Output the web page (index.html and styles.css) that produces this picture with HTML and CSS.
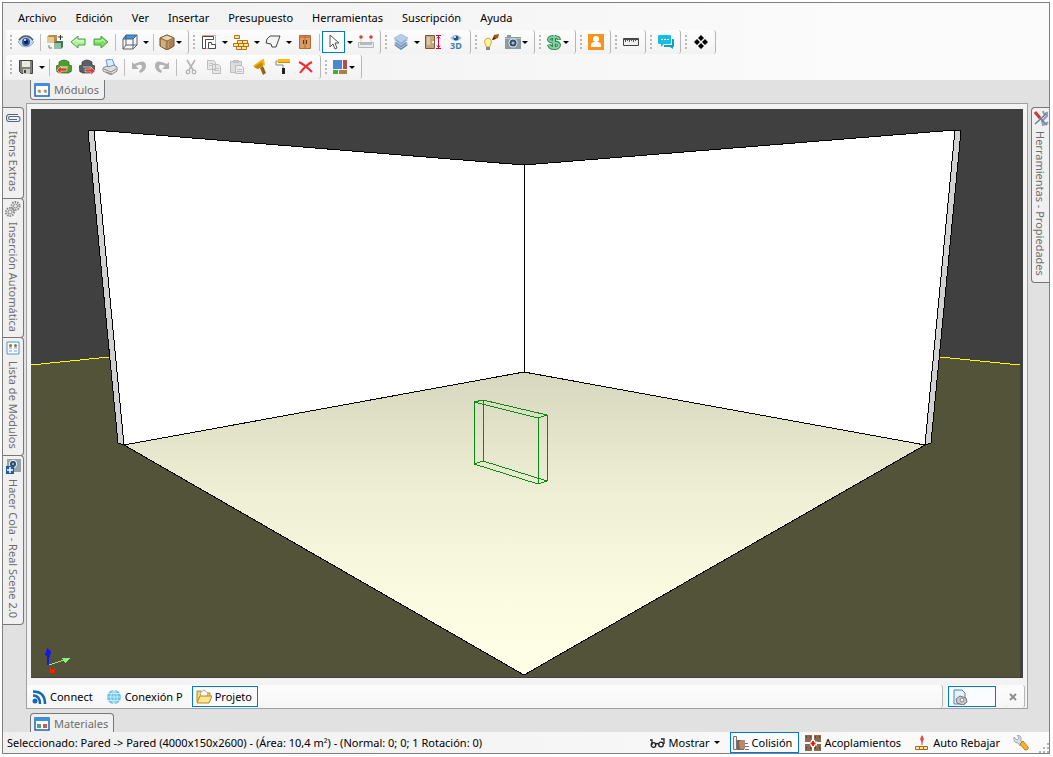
FILE: index.html
```html
<!DOCTYPE html>
<html lang="es">
  <head>
    <meta charset="UTF-8" />
    <meta name="viewport" content="width=device-width, initial-scale=1.0" />
    <title>Proyecto 3D</title>
    <link rel="stylesheet" href="styles.css">
  </head>

  <body>
    <div class="window">
      <header class="top">
        <nav class="menu">
          <button>Archivo</button>
          <button>Edición</button>
          <button>Ver</button>
          <button>Insertar</button>
          <button>Presupuesto</button>
          <button>Herramientas</button>
          <button>Suscripción</button>
          <button>Ayuda</button>
        </nav>

        <!-- first toolbar row -->
        <div class="toolbar">
          <div class="strip">
            <button class="tool" aria-label="Visualizar">
              <svg viewBox="0 0 16 16"><path d="M0 8Q3 3 8 3t8 5q-3 5-8 5T0 8z" fill="#c9d6e6" stroke="#7d93b5" stroke-width=".7"/><path d="M1 6q3-4 7-4t7 4" fill="none" stroke="#4d5870" stroke-width="1.5"/><circle cx="8" cy="8" r="4" fill="#2d5ca6"/><circle cx="8" cy="8" r="2" fill="#0d1d40"/><circle cx="7" cy="6" r="1" fill="#fff"/></svg>
            </button>
            <i class="sep"></i>
            <button class="tool" aria-label="Reemplazar módulo">
              <svg viewBox="0 0 16 16"><path d="M0 3l2-2h8v6L8 9H0z" fill="#b98a4d"/><path d="M0 3h7v6H0z" fill="#e9c793"/><path d="M7 9l2-2h7v6l-2 2H7z" fill="#3f7558"/><path d="M7 9h7v6H7z" fill="#8cc0a0"/><path d="M11 3h5M13.500 1v5" stroke="#333"/><path d="M2 11v3h3" fill="none" stroke="#777"/></svg>
            </button>
            <button class="tool" aria-label="Anterior">
              <svg viewBox="0 0 16 16"><path d="M1 8l7-6v3h7v6H8v3z" fill="#b5efa0" stroke="#3da63a"/><path d="M3 8l4-3v2h7" fill="none" stroke="#e9fde2"/></svg>
            </button>
            <button class="tool" aria-label="Siguiente">
              <svg viewBox="0 0 16 16"><path d="M15 8L8 2v3H1v6h7v3z" fill="#7ddc62" stroke="#3da63a"/><path d="M2 7h7V5l3 3" fill="none" stroke="#d9fbcc"/></svg>
            </button>
            <i class="sep"></i>
            <button class="tool" aria-label="Vista">
              <svg viewBox="0 0 16 16"><path d="M4 1h11l-4 4H1z" fill="#3b93ee"/><path d="M1 5h10v10H1zM1 5l3-4h11v10l-4 4M11 5l4-4M4 1v10h11M4 11l-3 4" fill="none" stroke="#56616d"/></svg>
            </button>
            <button class="caret" aria-label="Más vistas"></button>
            <i class="sep"></i>
            <button class="tool drop" aria-label="Texturas">
              <svg viewBox="0 0 16 16"><path d="M1 4l7-3 7 3v8l-7 4-7-4z" fill="#c39c6e" stroke="#6d4b27"/><path d="M1 4l7 3 7-3-7-3z" fill="#ecd4ae" stroke="#8a673f"/><path d="M3 6v7M5 7v7" stroke="#e0c194"/><path d="M8 7v9M11 7v7M13 6v7" stroke="#8b6439"/></svg>
            </button>
          </div>

          <div class="strip">
            <button class="tool" aria-label="Pared">
              <svg viewBox="0 0 16 16"><path d="M1.500 1.500h13v13h-13z" fill="#fff" stroke="#f09a9a"/><path d="M1.500 14.500v-12h11v3h-8v9zM7.500 14.500v-6h3v2h4v4z" fill="#fff" stroke="#4a4a4a"/></svg>
            </button>
            <button class="caret" aria-label="Más paredes"></button>
            <button class="tool" aria-label="Ladrillos">
              <svg viewBox="0 0 16 16"><path d="M1.500 1.500h5v3h-5zM4.500 6.500h5v3h-5zM.500 9.500h5v3h-5zM5.500 9.500h5v3h-5zM10.500 9.500h5v3h-5zM3.500 12.500h5v3h-5zM8.500 12.500h5v3h-5zM9.500 6.500h5v3h-5z" fill="#ffe2a0" stroke="#b0730f"/></svg>
            </button>
            <button class="caret" aria-label="Más ladrillos"></button>
            <button class="tool" aria-label="Forma">
              <svg viewBox="0 0 16 16"><path d="M5 2h10l-4 11H7L6 10 1 9l1-4z" fill="#f4f4f4" stroke="#444"/></svg>
            </button>
            <button class="caret" aria-label="Más formas"></button>
            <button class="tool" aria-label="Armario">
              <svg viewBox="0 0 16 16"><path d="M2.500 1.500h11v13h-11z" fill="#dd9b60" stroke="#b06d3a"/><path d="M8 2v12M3 3h10" stroke="#b06d3a"/><path d="M6.500 6v4M9.500 6v4" stroke="#5c3012"/></svg>
            </button>
            <i class="sep"></i>
            <button class="tool active" aria-label="Seleccionar">
              <svg viewBox="0 0 16 16"><path d="M4 1v12l3-3 2 5 2-1-2-5h4z" fill="#fff" stroke="#555"/></svg>
            </button>
            <button class="caret" aria-label="Más selecciones"></button>
            <button class="tool" aria-label="Medir">
              <svg viewBox="0 0 16 16"><path d="M.500 8.500h15v5H.500z" fill="#ececf2" stroke="#b5b5bd"/><path d="M3 9v2M5 9v2M7 9v2M9 9v2M11 9v2M13 9v2" stroke="#888"/><path d="M3 4v4M13 4v4" stroke="#ccc"/><circle cx="3" cy="3" r="1.800" fill="#c44848"/><circle cx="13" cy="3" r="1.800" fill="#c44848"/></svg>
            </button>
          </div>

          <div class="strip">
            <button class="tool" aria-label="Capas">
              <svg viewBox="0 0 16 16"><path d="M1 11l7-4 7 4-7 5z" fill="#6787ab"/><path d="M1 9l7-4 7 4-7 5z" fill="#7c9dc2" stroke="#dfe9f5" stroke-width=".5"/><path d="M1 6l7-4 7 4-7 5z" fill="#92b2d4" stroke="#dfe9f5" stroke-width=".5"/><path d="M1 4l7-4 7 4-7 5z" fill="#b6cfe8" stroke="#84a5c9" stroke-width=".5"/></svg>
            </button>
            <button class="caret" aria-label="Más capas"></button>
            <button class="tool" aria-label="Altura">
              <svg viewBox="0 0 16 16"><path d="M.500 1.500h9v13h-9z" fill="#c4a77e" stroke="#76583a"/><path d="M2 3h3v8H2z" fill="#dcc8a6"/><circle cx="8" cy="8" r="1" fill="#fff"/><path d="M11 1.500h5M11 14.500h5M13.500 2v12M12 4.500l1.500-2 1.500 2M12 11.500l1.500 2 1.500-2" fill="none" stroke="#d6003f"/></svg>
            </button>
            <button class="tool" aria-label="Vista 3D">
              <svg viewBox="0 0 16 16"><path d="M2 4q6-6 12 0-6 6-12 0z" fill="#a7c7de"/><circle cx="8" cy="4" r="2.500" fill="#24557c"/><circle cx="7" cy="3" r="1" fill="#fff"/><text x="2" y="15" font-size="9" font-weight="700" fill="#3d7fae">3D</text></svg>
            </button>
          </div>

          <div class="strip">
            <button class="tool" aria-label="Iluminación">
              <svg viewBox="0 0 16 16"><path d="M5 4a4 4 0 0 0-2 7v2h4v-2a4 4 0 0 0-2-7z" fill="#fff2a0" stroke="#d0ac35"/><path d="M3 13h4v3H3z" fill="#888"/><path d="M9 6l2-5 5-1-1 4z" fill="#a35711"/><path d="M9 6l2-3 2 2z" fill="#3a2410"/></svg>
            </button>
            <button class="tool drop" aria-label="Cámara">
              <svg viewBox="0 0 16 16"><path d="M0 3h2V1h4v2h10v12H0z" fill="#8a9ba3"/><path d="M0 4h16v1H0z" fill="#b7c3c8"/><circle cx="8" cy="9" r="4.500" fill="#e8edf0"/><circle cx="8" cy="9" r="3.500" fill="#344d69"/><circle cx="8" cy="9" r="1.500" fill="#9fc5e4"/></svg>
            </button>
          </div>

          <div class="strip">
            <button class="tool drop" aria-label="Precio">
              <svg viewBox="0 0 16 16"><path d="M13 6C13 2 3 2 3 5.500S13 7 13 11s-9 4-10-.500M8 1v14" fill="none" stroke="#2f8a52" stroke-width="4"/><path d="M13 5.500C13 2 3 2 3 5.500S13 7 13 11s-9 4-10 0M8 1v14" fill="none" stroke="#8bd3a7" stroke-width="1.800"/></svg>
            </button>
          </div>

          <div class="strip">
            <button class="tool" aria-label="Cliente">
              <svg viewBox="0 0 16 16"><path d="M0 0h16v16H0z" fill="#f7941d"/><circle cx="8" cy="5" r="3" fill="#fff"/><path d="M3 13q-1-4 3-5h4q4 1 3 5z" fill="#fff"/></svg>
            </button>
          </div>

          <div class="strip">
            <button class="tool" aria-label="Regla">
              <svg viewBox="0 0 16 16"><path d="M.500 4.500h15v7H.500z" fill="#eee" stroke="#444"/><path d="M1 5.500h14" stroke="#444"/><path d="M2.500 5v3M4.500 5v2M6.500 5v3M8.500 5v2M10.500 5v3M12.500 5v2" stroke="#555"/></svg>
            </button>
          </div>

          <div class="strip">
            <button class="tool" aria-label="Chat">
              <svg viewBox="0 0 16 16"><path d="M14 5h1q1 0 1 1v6q0 1-1 1v2l-3-2H6v-2h8z" fill="#0d9fc5"/><path d="M1 1h11q1 0 1 1v7q0 1-1 1H6l-3 3v-3H1q-1 0-1-1V2q0-1 1-1z" fill="#18bde0"/><path d="M3 5h2v1H3zM6 5h2v1H6zM9 5h2v1H9z" fill="#fff"/></svg>
            </button>
          </div>

          <div class="strip">
            <button class="tool" aria-label="Mover">
              <svg viewBox="0 0 16 16"><path d="M8 1l3 3-3 3-3-3zM4 5l3 3-3 3-3-3zM12 5l3 3-3 3-3-3zM8 9l3 3-3 3-3-3z"/></svg>
            </button>
          </div>
        </div>

        <!-- second toolbar row -->
        <div class="toolbar">
          <div class="strip">
            <button class="tool" aria-label="Guardar">
              <svg viewBox="0 0 16 16"><path d="M1.500 1.500h13v13h-11l-2-2z" fill="#80817a" stroke="#40413c"/><path d="M4 2h8v6H4z" fill="#e9ebe2"/><path d="M5 10h7v5H5z" fill="#c8c9be"/><path d="M6 11h2v3H6z" fill="#444"/></svg>
            </button>
            <button class="caret" aria-label="Más opciones de guardado"></button>
            <i class="sep"></i>
            <button class="tool" aria-label="Importar módulo">
              <svg viewBox="0 0 16 16"><path d="M3 6V3q5-4 10 0v3l3 1-1 6h-2v1H3v-1H1L0 7z" fill="#4f9e2d" stroke="#28651a" stroke-width=".7"/><path d="M4 7h8v2H4z" fill="#8bd35d"/><path d="M1 11l4-4v2h6v3H5v3z" fill="#e8352e" stroke="#fff" stroke-width=".5"/></svg>
            </button>
            <button class="tool" aria-label="Exportar módulo">
              <svg viewBox="0 0 16 16"><path d="M3 6V3q5-4 10 0v3l3 1-1 6h-2v1H3v-1H1L0 7z" fill="#5c5f63" stroke="#333" stroke-width=".7"/><path d="M4 7h8v2H4z" fill="#8c8f93"/><path d="M16 12l-4-4v2H6v3h6v3z" fill="#e8352e" stroke="#fff" stroke-width=".5"/></svg>
            </button>
            <button class="tool" aria-label="Imprimir">
              <svg viewBox="0 0 16 16"><path d="M4 1l6-1 3 7-7 2z" fill="#dcecff" stroke="#6a94cd"/><path d="M1 9l4-2 1 1 6-2 3 2v4l-6 4-8-4z" fill="#dedede" stroke="#8a8a8a"/><path d="M2 10l7 3 5-3M4 13l6 2" fill="none" stroke="#8a8a8a"/></svg>
            </button>
            <i class="sep"></i>
            <button class="tool" aria-label="Deshacer">
              <svg viewBox="0 0 16 16"><path d="M1 3v7h7L5 7q6-3 6 1 0 2-3 4l1 2q6-2 6-7 0-8-12-2z" fill="#b2b2b2"/></svg>
            </button>
            <button class="tool" aria-label="Rehacer">
              <svg viewBox="0 0 16 16"><path d="M15 3v7H8l3-3Q5 4 5 8q0 2 3 4l-1 2Q1 12 1 7q0-8 12-2z" fill="#b2b2b2"/></svg>
            </button>
            <i class="sep"></i>
            <button class="tool" aria-label="Cortar">
              <svg viewBox="0 0 16 16"><path d="M4 1l6 10M12 1L6 11" stroke="#b2b2b2" stroke-width="1.500"/><circle cx="5" cy="13" r="1.800" fill="none" stroke="#b2b2b2" stroke-width="1.300"/><circle cx="11" cy="13" r="1.800" fill="none" stroke="#b2b2b2" stroke-width="1.300"/></svg>
            </button>
            <button class="tool" aria-label="Copiar">
              <svg viewBox="0 0 16 16"><path d="M1.500 1.500h6l2 2v7h-8zM6.500 5.500h6l2 2v7h-8z" fill="#e8e8e8" stroke="#bdbdbd"/><path d="M8 9.500h5M8 11.500h5M3 4.500h4M3 6.500h3" stroke="#c5c5c5"/></svg>
            </button>
            <button class="tool" aria-label="Pegar">
              <svg viewBox="0 0 16 16"><path d="M1.500 2.500h11v11h-11z" fill="#ddd" stroke="#bdbdbd"/><path d="M4 1h6v3H4z" fill="#c2c2c2"/><path d="M6.500 6.500h6l2 2v6h-8z" fill="#ececec" stroke="#bdbdbd"/><path d="M8 10.500h5M8 12.500h5" stroke="#c5c5c5"/></svg>
            </button>
            <button class="tool" aria-label="Pincel">
              <svg viewBox="0 0 16 16"><path d="M1 7l8-6 3-1 1 6-3 1-5 3z" fill="#f0b51c"/><path d="M2 8l8-5 1 4-5 3z" fill="#c78709"/><path d="M8 9l3-2 3 7-3 2z" fill="#96640d"/></svg>
            </button>
            <button class="tool" aria-label="Rodillo">
              <svg viewBox="0 0 16 16"><path d="M3 0h12v4H3z" fill="#f7bd15"/><path d="M3 3h12v1H3z" fill="#cf8d00"/><path d="M3 2H1v4h7v4" fill="none" stroke="#888"/><path d="M7 9h3v6H7z" fill="#222"/></svg>
            </button>
            <button class="tool" aria-label="Eliminar">
              <svg viewBox="0 0 16 16"><path d="M1 3q6 3 13 10M14 3Q8 6 2 14" fill="none" stroke="#f02b32" stroke-width="2"/></svg>
            </button>
          </div>

          <div class="strip">
            <button class="tool drop" aria-label="Paleta">
              <svg viewBox="0 0 16 16"><path d="M1 1h9v9H1z" fill="#4788cf"/><path d="M11 1h4v9h-4z" fill="#bb4a50"/><path d="M1 11h5v4H1z" fill="#4eaa36"/><path d="M7 11h8v4H7z" fill="#a88345"/></svg>
            </button>
          </div>
        </div>
      </header>

      <main class="dock">
        <div class="tabs-top">
          <button class="tab">
            <svg viewBox="0 0 16 16"><path d="M1 2h14v12H1z" fill="#fff" stroke="#1768b5" stroke-width="1.500"/><path d="M1 2h14v2H1z" fill="#3a91df"/><circle cx="5" cy="9" r="1.500" fill="#b59c70"/><circle cx="11" cy="9" r="1.500" fill="#b59c70"/><path d="M6 8v3M12 8v3" stroke="#777"/></svg>
            Módulos
          </button>
        </div>

        <aside class="side left">
          <button class="vtab">
            <svg viewBox="0 0 16 16"><path d="M13 4.500H4q-2.500 0-2.500 3.500T4 11.500h9q2 0 2-2.500t-2-2.500H5q-1.500 0-1.500 1.500T5 9.500h7" fill="none" stroke="#526789" stroke-width="1.100"/></svg>
            Itens Extras
          </button>
          <button class="vtab">
            <svg viewBox="0 0 16 16"><g fill="none" stroke="#888"><circle cx="10.500" cy="5" r="4" stroke-width="2" stroke-dasharray="1.500 1"/><circle cx="10.500" cy="5" r="2"/><circle cx="5" cy="11" r="4" stroke-width="2" stroke-dasharray="1.500 1"/><circle cx="5" cy="11" r="2"/></g></svg>
            Inserción Automática
          </button>
          <button class="vtab">
            <svg viewBox="0 0 16 16"><path d="M2 2h12v12H2z" fill="#f8fcff" stroke="#5b93c8"/><circle cx="5.500" cy="5.500" r="1.500" fill="#8e763c"/><circle cx="10.500" cy="5.500" r="1.500" fill="#8e763c"/><path d="M4 8h3M9 8h3M4 11h3M9 11h3" stroke="#789dc0"/></svg>
            Lista de Módulos
          </button>
          <button class="vtab">
            <svg viewBox="0 0 16 16"><path d="M2 1h14v13H2z" fill="#94a4ac"/><circle cx="8" cy="6" r="4" fill="#e9eef1"/><circle cx="8" cy="6" r="3" fill="#2c4a68"/><circle cx="8" cy="6" r="1" fill="#a9d2ee"/><path d="M1 8h8v8H1z" fill="#215c9e"/><path d="M5 9v6M2 12h6" stroke="#fff" stroke-width="1.500"/></svg>
            Hacer Cola - Real Scene 2.0
          </button>
        </aside>

        <section class="panel">
          <svg class="scene" viewBox="31 109 992 569" preserveAspectRatio="none">
            <defs>
              <linearGradient id="floor" x1="0" y1="0" x2="0" y2="1">
                <stop offset="0" stop-color="#d7d7bf"/>
                <stop offset=".4" stop-color="#efefd5"/>
                <stop offset=".75" stop-color="#fbfbe1"/>
                <stop offset="1" stop-color="#ffffe8"/>
              </linearGradient>
            </defs>
            <path d="M31 109h992v569H31z" fill="#404040"/>
            <path d="M31 365l494-45 495 45v312H31z" fill="#535339"/>
            <path d="M31 365l78-8M940 357l80 8" fill="none" stroke="#ff0"/>
            <!-- walls -->
            <g stroke="#000" stroke-linejoin="round">
              <path d="M88 131l6-1 30 315-6-2z" fill="#d2d1d2"/>
              <path d="M961 131l-6-1-30 315 6-2z" fill="#d2d1d2"/>
              <path d="M94 130l430 35v207l-400 73z" fill="#fff"/>
              <path d="M955 130l-431 35v207l401 73z" fill="#fff"/>
              <path d="M524 372l401 73-401 230-400-230z" fill="url(#floor)"/>
              <path d="M118 443l6 2M931 443l-6 2" fill="none"/>
            </g>
            <!-- wireframe of the module being placed -->
            <path d="M474 402l9-2 64 15-9 3zM474 464l9-3 64 20-9 3zM474 402v62M483 400v61M547 415v66M538 418v66" fill="none" stroke="#098a12"/>
            <!-- axes -->
            <path d="M48 665v-10" stroke="#1616f0" stroke-width="1.500"/>
            <path d="M45 655l2-7 4 4-1 5z" fill="#1616f0"/>
            <path d="M49 665l15-5" stroke="#8cf07c"/>
            <path d="M62 658l9 0-6 5z" fill="#8cf07c"/>
            <path d="M49 666l2 4" stroke="#ff1b00"/>
            <path d="M50 669h5v4h-5z" fill="#ff1b00"/>
          </svg>

          <div class="pages">
            <div class="page-list">
              <button class="page">
                <svg viewBox="0 0 16 16"><circle cx="4" cy="12" r="2.500" fill="#1568b3"/><path d="M2 6.500q7 0 7 8.500M2 2.500q12 0 12 12.500" fill="none" stroke="#1568b3" stroke-width="2.500"/></svg>
                Connect
              </button>
              <button class="page">
                <svg viewBox="0 0 16 16"><circle cx="8" cy="8" r="7" fill="#68bfea"/><path d="M8 1v14M1 8h14M2 4.500h12M2 11.500h12M8 1q-7 7 0 14M8 1q7 7 0 14" fill="none" stroke="#e0f6ff" stroke-width=".8"/></svg>
                Conexión P
              </button>
              <button class="page active">
                <svg viewBox="0 0 16 16"><path d="M1 13V2h4l1 2h8v4" fill="#f5d775" stroke="#b88918"/><path d="M5 3l3-2 4 3-1 4H4z" fill="#fff" stroke="#aaa"/><path d="M1 14l3-7h12l-3 7z" fill="#ffe58e" stroke="#b88918"/></svg>
                Projeto
              </button>
            </div>
            <div class="page-end">
              <button class="page active preview" aria-label="Vista preliminar">
                <svg viewBox="0 0 16 16"><path d="M2 1h8l3 3v11H2z" fill="#e8f2ff" stroke="#4b82c4"/><path d="M4 10l4-3 6 2 1 4-4 3-6-2z" fill="#ccc" stroke="#777"/><circle cx="10" cy="11" r="2" fill="#eee" stroke="#888"/></svg>
              </button>
              <button class="close" aria-label="Cerrar">
                <svg viewBox="0 0 8 8"><path d="M1 1l6 6M7 1L1 7" stroke="#8b8b8b" stroke-width="1.800"/></svg>
              </button>
            </div>
          </div>
        </section>

        <aside class="side right">
          <button class="vtab">
            <svg viewBox="0 0 16 16"><path d="M10 1l1 3 3-1v3l-5 5 1 4 3-1 2-2" fill="none" stroke="#8ba0b8" stroke-width="2"/><path d="M5 6l9 9M2 14L13 4" stroke="#6c7c94" stroke-width="1.500"/><path d="M2 2l5 6" stroke="#c93a32" stroke-width="3"/></svg>
            Herramientas - Propiedades
          </button>
        </aside>

        <div class="tabs-bottom">
          <button class="tab">
            <svg viewBox="0 0 16 16"><path d="M1 2h14v12H1z" fill="#fff" stroke="#1768b5" stroke-width="1.500"/><path d="M1 2h14v3H1z" fill="#3a91df"/><path d="M3 8h4v4H3z" fill="#5c9b83"/><path d="M9 8h4v4H9z" fill="#cf5555"/></svg>
            Materiales
          </button>
        </div>
      </main>

      <footer class="status">
        <span class="message">Seleccionado: Pared -&gt; Pared (4000x150x2600) - (Área: 10,4 m²) - (Normal: 0; 0; 1 Rotación: 0)</span>
        <button class="option has-caret">
          <svg viewBox="0 0 16 16"><path d="M1 5h2v5M6 10q2-3 4 0M15 9V4h-3" fill="none" stroke="#222" stroke-width="1.300"/><circle cx="4.500" cy="10" r="2.300" fill="none" stroke="#222" stroke-width="1.300"/><circle cx="12" cy="9.500" r="2.300" fill="none" stroke="#222" stroke-width="1.300"/></svg>
          Mostrar
        </button>
        <button class="option active">
          <svg viewBox="0 0 16 16"><path d="M.500 1.500h3v13h-3z" fill="#eee" stroke="#777"/><path d="M4 5h7v10H4z" fill="#8b614a"/><path d="M6 7l2-2h4v9H7z" fill="#b58c70"/><path d="M12 8.500h3M12 11.500h4M12 14.500h4" stroke="#777"/></svg>
          Colisión
        </button>
        <button class="option">
          <svg viewBox="0 0 16 16"><path d="M0 0h7v7H0zM9 0h7v7H9zM0 9h7v7H0zM9 9h7v7H9z" fill="#8c6a50"/><path d="M1 2h1M5 2h1M10 2h1M14 2h1M1 13h1M5 13h1M10 13h1M14 13h1" stroke="#321d10"/><path d="M8 5v7M5 8.500h7" stroke="#fff" stroke-width="4"/><path d="M8 6v5M5.500 8.500h5" stroke="#ed1717" stroke-width="2"/></svg>
          Acoplamientos
        </button>
        <button class="option">
          <svg viewBox="0 0 16 16"><path d="M8 1v9" stroke="#dd3f3f"/><path d="M6 4l2-4 2 4-2 4z" fill="#e34b4b"/><path d="M1.500 11.500h12v3h-12zM5.500 12v3M9.500 12v3" fill="#ffe6a8" stroke="#a96b17"/></svg>
          Auto Rebajar
        </button>
        <button class="option" aria-label="Configuración">
          <svg viewBox="0 0 16 16"><path d="M1 2l3 3 2-2-2-3q5 0 4 6l2 2-3 3-2-3Q0 8 1 2z" fill="#d5dbe2" stroke="#8a929c" stroke-width=".7"/><path d="M7 9l3-3 5 6q1 3-3 3z" fill="#f5b431" stroke="#c17c12"/></svg>
        </button>
        <svg class="resize" viewBox="0 0 10 10"><path d="M8 0h2v2H8zM4 4h2v2H4zM8 4h2v2H8zM0 8h2v2H0zM4 8h2v2H4zM8 8h2v2H8z" fill="#b4b4b4"/></svg>
      </footer>
    </div>
  </body>
</html>
```

FILE: styles.css
```css
* {
  box-sizing: border-box;
  margin: 0;
  padding: 0;
}

body {
  height: 100vh;
  padding: 2px 3px 3px 2px;
  background-color: #fff;
  font-family: "Noto Sans", "Open Sans", sans-serif;
  font-size: 11px;
  color: #000;
}

button {
  display: flex;
  align-items: center;
  border: 1px solid transparent;
  background: none;
  font: inherit;
  color: inherit;
  white-space: nowrap;
}

svg {
  flex: none;
  width: 16px;
  height: 16px;
}

.window {
  height: 100%;
  display: flex;
  flex-direction: column;
  border: 1px solid #808080;
  background-color: #e1e1e1;
}

/* menu and toolbars */
.top {
  padding: 2px 0 0 3px;
  background: linear-gradient(to right, #f0f0f0, #fbfbfb 85%);
}
.menu {
  display: flex;
  gap: 1px;
  height: 25px;
  padding: 0 0 1px 3px;
}
.menu button {
  padding: 0 8px;
}
.menu button:hover {
  background-color: #d8eafa;
}
.toolbar {
  display: flex;
  height: 25px;
}
.strip {
  display: flex;
  align-items: center;
  height: 24px;
  padding-right: 3px;
  border-right: 1px solid #b6b6b6;
  border-radius: 3px;
  background: linear-gradient(#fdfdfd, #f2f2f2);
}
.strip::before {
  content: "";
  width: 2px;
  height: 15px;
  margin: 0 2px 0 4px;
  background: repeating-linear-gradient(#b8b8b8 0 2px, transparent 2px 4px);
}
.tool {
  width: 23px;
  height: 22px;
  justify-content: center;
}
.drop {
  width: 29px;
  gap: 1px;
}
.active {
  border-color: #0078d7;
  background-color: #fafcff;
}
.caret {
  width: 9px;
  height: 22px;
  justify-content: center;
}
.caret::after,
.drop::after,
.has-caret::after {
  content: "";
  border: 3px solid transparent;
  border-top-color: #000;
  border-bottom: 0;
}
.sep {
  width: 1px;
  height: 17px;
  margin: 0 2px 0 3px;
  background-color: #bdbdbd;
}

/* dock area */
.dock {
  flex: 1;
  min-height: 0;
  display: grid;
  grid-template-columns: 23px 1fr 21px;
  grid-template-rows: 23px 1fr 24px;
}
.tabs-top,
.tabs-bottom {
  grid-column: 1 / -1;
  display: flex;
  padding-left: 27px;
}
.tabs-bottom {
  align-items: flex-end;
}
.tab {
  height: 20px;
  padding: 0 5px 0 3px;
  gap: 4px;
  border: 1px solid #777;
  border-top: 0;
  border-radius: 0 0 4px 4px;
  background-color: #f0f0f0;
  color: #6d6d6d;
}
.tabs-bottom .tab {
  border: 1px solid #777;
  border-bottom: 0;
  border-radius: 4px 4px 0 0;
}
.side {
  display: flex;
  flex-direction: column;
  padding-top: 4px;
}
.left {
  padding-right: 2px;
}
.right {
  padding-left: 3px;
}
.vtab {
  writing-mode: vertical-rl;
  justify-content: flex-start;
  padding: 2px 0 6px;
  gap: 5px;
  border: 1px solid #777;
  border-left: 0;
  border-radius: 0 4px 4px 0;
  background-color: #f0f0f0;
  color: #6d6d6d;
}
.vtab + .vtab {
  margin-top: -1px;
}
.right .vtab {
  border: 1px solid #777;
  border-right: 0;
  border-radius: 4px 0 0 4px;
}

.panel {
  display: flex;
  flex-direction: column;
  border: 1px solid #a0a0a0;
  background-color: #f3f3f3;
}
.scene {
  flex: 1;
  width: auto;
  min-height: 0;
  margin: 5px 4px 7px;
  shape-rendering: crispEdges;
}
.pages {
  display: flex;
  gap: 3px;
  padding-right: 2px;
}
.page-list,
.page-end {
  display: flex;
  align-items: center;
  height: 23px;
  border-right: 1px solid #b6b6b6;
  border-radius: 3px;
  background: linear-gradient(#fdfdfd, #f6f6f6);
}
.page-list {
  flex: 1;
  gap: 3px;
}
.page-end {
  padding: 0 6px 0 2px;
  gap: 12px;
}
.page {
  height: 21px;
  padding: 0 5px 0 3px;
  gap: 3px;
}
.preview {
  width: 48px;
}
.close svg {
  width: 8px;
  height: 8px;
}

/* status bar */
.status {
  display: flex;
  align-items: center;
  height: 21px;
  padding-left: 4px;
  background: linear-gradient(to right, #f0f0f0, #fbfbfb);
}
.message {
  flex: 1;
  white-space: nowrap;
}
.option {
  height: 21px;
  padding: 0 6px 0 2px;
  gap: 3px;
  margin-right: 3px;
}
.has-caret {
  gap: 4px;
}
.resize {
  align-self: flex-end;
  width: 10px;
  height: 10px;
}
```
